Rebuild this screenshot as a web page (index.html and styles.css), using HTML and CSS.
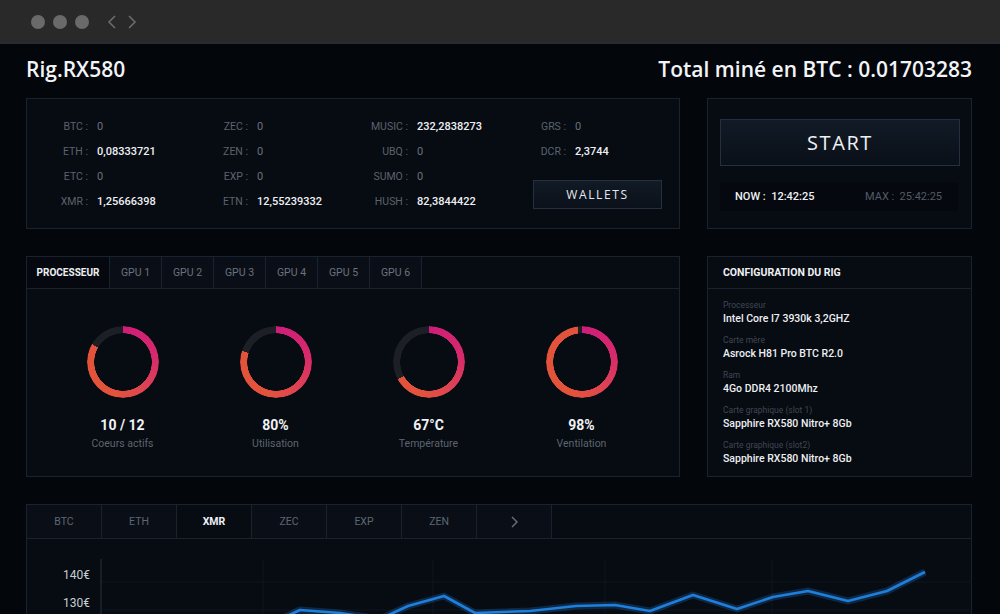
FILE: index.html
```html
<!DOCTYPE html>
<html lang="fr">
<head>
<meta charset="utf-8">
<title>Rig.RX580</title>
<link rel="stylesheet" href="styles.css">
</head>
<body>
<div class="titlebar">
  <span class="dot"></span><span class="dot"></span><span class="dot"></span>
  <svg class="nav" width="36" height="16" viewBox="0 0 36 16"><path d="M11 2 L5 8 L11 14"/><path d="M25 2 L31 8 L25 14"/></svg>
</div>
<main class="app">
  <header class="head">
    <h1 class="rig">Rig.RX580</h1>
    <div class="total">Total miné en BTC : 0.01703283</div>
  </header>

  <section class="row row-top">
    <div class="panel wallets">
      <div class="wgrid">
        <span class="lbl">BTC :</span><span class="val dim">0</span>
        <span class="lbl">ZEC :</span><span class="val dim">0</span>
        <span class="lbl">MUSIC :</span><span class="val">232,2838273</span>
        <span class="lbl">GRS :</span><span class="val dim">0</span>
        <span class="lbl">ETH :</span><span class="val">0,08333721</span>
        <span class="lbl">ZEN :</span><span class="val dim">0</span>
        <span class="lbl">UBQ :</span><span class="val dim">0</span>
        <span class="lbl">DCR :</span><span class="val">2,3744</span>
        <span class="lbl">ETC :</span><span class="val dim">0</span>
        <span class="lbl">EXP :</span><span class="val dim">0</span>
        <span class="lbl">SUMO :</span><span class="val dim">0</span>
        <span class="lbl">XMR :</span><span class="val">1,25666398</span>
        <span class="lbl">ETN :</span><span class="val">12,55239332</span>
        <span class="lbl">HUSH :</span><span class="val">82,3844422</span>
        <button class="wbtn">WALLETS</button>
      </div>
    </div>
    <div class="panel control">
      <button class="start">START</button>
      <div class="times">
        <span class="now">NOW :&nbsp; 12:42:25</span>
        <span class="max">MAX :&nbsp; 25:42:25</span>
      </div>
    </div>
  </section>

  <section class="row row-mid">
    <div class="panel proc">
      <nav class="tabs">
        <span class="tab active">PROCESSEUR</span>
        <span class="tab">GPU 1</span>
        <span class="tab">GPU 2</span>
        <span class="tab">GPU 3</span>
        <span class="tab">GPU 4</span>
        <span class="tab">GPU 5</span>
        <span class="tab">GPU 6</span>
      </nav>
      <div class="gauges">
        <div class="gauge"><div class="donut" style="--p:83.3"></div><div class="gval">10 / 12</div><div class="glbl">Coeurs actifs</div></div>
        <div class="gauge"><div class="donut" style="--p:80"></div><div class="gval">80%</div><div class="glbl">Utilisation</div></div>
        <div class="gauge"><div class="donut" style="--p:67"></div><div class="gval">67°C</div><div class="glbl">Température</div></div>
        <div class="gauge"><div class="donut" style="--p:98"></div><div class="gval">98%</div><div class="glbl">Ventilation</div></div>
      </div>
    </div>
    <div class="panel config">
      <div class="chead">CONFIGURATION DU RIG</div>
      <dl class="clist">
        <dt>Processeur</dt><dd>Intel Core I7 3930k 3,2GHZ</dd>
        <dt>Carte mère</dt><dd>Asrock H81 Pro BTC R2.0</dd>
        <dt>Ram</dt><dd>4Go DDR4 2100Mhz</dd>
        <dt>Carte graphique (slot 1)</dt><dd>Sapphire RX580 Nitro+ 8Gb</dd>
        <dt>Carte graphique (slot2)</dt><dd>Sapphire RX580 Nitro+ 8Gb</dd>
      </dl>
    </div>
  </section>

  <section class="panel chart">
    <nav class="ctabs">
      <span class="ctab">BTC</span>
      <span class="ctab">ETH</span>
      <span class="ctab active">XMR</span>
      <span class="ctab">ZEC</span>
      <span class="ctab">EXP</span>
      <span class="ctab">ZEN</span>
      <span class="ctab arrow"><svg width="10" height="12" viewBox="0 0 10 12"><path d="M3 1 L8 6 L3 11"/></svg></span>
      <span class="cfill"></span>
    </nav>
    <svg class="plot" width="945" height="160" viewBox="0 0 945 160">
      <g class="grid">
        <line x1="74" y1="43" x2="945" y2="43"/>
        <line x1="74" y1="71" x2="945" y2="71"/>
        <line x1="236" y1="20" x2="236" y2="160"/>
        <line x1="406" y1="20" x2="406" y2="160"/>
        <line x1="578" y1="20" x2="578" y2="160"/>
        <line x1="745" y1="20" x2="745" y2="160"/>
      </g>
      <line class="axis" x1="74" y1="20" x2="74" y2="160"/>
      <text class="ylab" x="63" y="40">140€</text>
      <text class="ylab" x="63" y="68">130€</text>
      <polyline class="glow" points="200,110 243,85 273,71 313,74 353,80 381,67 417,57 448,74 503,72 549,67 588,66 623,72 666,56 710,70 746,58 781,52 821,62 860,52 898,33"/>
      <polyline class="line" points="200,110 243,85 273,71 313,74 353,80 381,67 417,57 448,74 503,72 549,67 588,66 623,72 666,56 710,70 746,58 781,52 821,62 860,52 898,33"/>
    </svg>
  </section>
</main>
</body>
</html>
```

FILE: styles.css
```css
html, body {
  margin: 0;
  padding: 0;
  overflow: hidden;
  background: #03060b;
  height: 100%;
}
body {
  font-family: Roboto, "Noto Sans", sans-serif;
  color: #e9ecf0;
}

.titlebar {
  height: 44px;
  background: #2a292a;
  border-bottom: 1px solid #262c36;
  display: flex;
  align-items: center;
  gap: 8px;
  padding-left: 31px;
  box-sizing: border-box;
}
.dot {
  width: 14px;
  height: 14px;
  border-radius: 50%;
  background: #6a6a6a;
}
.nav {
  margin-left: 7px;
  fill: none;
  stroke: #6b6b6b;
  stroke-width: 1.6;
}

.app {
  padding: 0 28px 0 26px;
}
.head {
  height: 49px;
  display: flex;
  align-items: center;
  justify-content: space-between;
  margin-bottom: 5px;
  font-family: "Open Sans", sans-serif;
  font-weight: 600;
  font-size: 21px;
  color: #f2f4f7;
}
.rig {
  margin: 0;
  font-size: 21px;
  font-weight: 600;
}

.row {
  display: grid;
  grid-template-columns: 654px 265px;
  column-gap: 27px;
  margin-bottom: 27px;
}
.row-top { height: 131px; }
.row-mid { height: 221px; }

.panel {
  border: 1px solid #1a2230;
  background: #070b12;
  box-sizing: border-box;
}

/* wallets */
.wgrid {
  display: grid;
  grid-template-columns: 61px 102px 58px 102px 58px 97px 61px auto;
  grid-auto-rows: 25px;
  align-items: center;
  padding-top: 15px;
  font-size: 11px;
}
.lbl {
  text-align: right;
  color: #5b636e;
  font-size: 10.5px;
}
.val {
  color: #eef0f3;
  font-weight: 500;
  padding-left: 9px;
}
.val.dim {
  color: #6a727c;
  font-weight: 400;
}
.wbtn {
  grid-column: 7 / 9;
  grid-row: 3 / 5;
  justify-self: start;
  align-self: center;
  margin: 11px 0 0 28px;
  width: 129px;
  height: 29px;
  background: linear-gradient(#111a25, #0b111a);
  border: 1px solid #243040;
  color: #e6e9ee;
  font-family: "Open Sans", sans-serif;
  font-size: 12px;
  letter-spacing: 1.6px;
  cursor: pointer;
}

/* control */
.control {
  padding: 20px 12px 0 12px;
  display: flex;
  flex-direction: column;
  gap: 16px;
}
.start {
  width: 240px;
  height: 47px;
  background: linear-gradient(#111a26, #0a1018);
  border: 1px solid #223041;
  color: #eef1f4;
  font-family: "Open Sans", sans-serif;
  font-size: 20px;
  letter-spacing: 1.6px;
  cursor: pointer;
}
.times {
  width: 238px;
  height: 29px;
  background: #05080e;
  display: flex;
  align-items: center;
  font-size: 11px;
  padding-left: 15px;
  box-sizing: border-box;
}
.now {
  width: 130px;
  color: #eef0f3;
  font-weight: 500;
}
.max { color: #535b66; }

/* processor */
.proc { display: flex; flex-direction: column; }
.tabs {
  display: flex;
  height: 32px;
  border-bottom: 1px solid #1a2230;
  box-sizing: border-box;
}
.tab {
  width: 52px;
  display: flex;
  align-items: center;
  justify-content: center;
  border-right: 1px solid #1a2230;
  background: #0a0f17;
  font-size: 10.5px;
  color: #6a727c;
  box-sizing: border-box;
}
.tab.active {
  width: 83px;
  background: #05080e;
  color: #eef0f3;
  font-weight: 700;
  font-size: 10px;
}
.gauges {
  display: grid;
  grid-template-columns: repeat(4, 153px);
  padding: 37px 0 0 19px;
}
.gauge {
  display: flex;
  flex-direction: column;
  align-items: center;
}
.donut {
  width: 72px;
  height: 72px;
  border-radius: 50%;
  background: conic-gradient(#cf1d79 0%, #d62a6c 22%, #e0474d 42%, #e3533c 55%, #e3533c calc(var(--p) * 1%), #1c1f26 calc(var(--p) * 1%));
  -webkit-mask: radial-gradient(closest-side, transparent calc(100% - 7.5px), #000 calc(100% - 7px));
  mask: radial-gradient(closest-side, transparent calc(100% - 7.5px), #000 calc(100% - 7px));
}
.gval {
  margin-top: 18px;
  line-height: 18px;
  font-size: 14px;
  font-weight: 700;
  color: #f0f2f5;
}
.glbl {
  line-height: 16px;
  margin-top: 2px;
  font-size: 10.5px;
  color: #5d656f;
}

/* config */
.chead {
  height: 32px;
  display: flex;
  align-items: center;
  padding-left: 15px;
  border-bottom: 1px solid #1a2230;
  box-sizing: border-box;
  font-size: 10.5px;
  font-weight: 700;
  color: #eef0f3;
}
.clist {
  margin: 0;
  padding: 10px 0 0 15px;
}
.clist dt {
  font-size: 8.5px;
  line-height: 12px;
  color: #3f4752;
}
.clist dd {
  margin: 0 0 7px 0;
  font-size: 10.5px;
  line-height: 16px;
  font-weight: 500;
  color: #eef0f3;
}

/* chart */
.chart {
  width: 946px;
  height: 200px;
}
.ctabs {
  display: flex;
  height: 34px;
  border-bottom: 1px solid #1a2230;
  box-sizing: border-box;
}
.ctab {
  width: 75px;
  display: flex;
  align-items: center;
  justify-content: center;
  border-right: 1px solid #1a2230;
  background: #0a0f17;
  font-size: 10.5px;
  color: #5e6670;
  box-sizing: border-box;
}
.ctab.active {
  background: #070b12;
  color: #eef0f3;
  font-weight: 700;
}
.ctab.arrow svg {
  fill: none;
  stroke: #6a727c;
  stroke-width: 1.4;
}
.cfill {
  flex: 1;
  background: #070b12;
}
.plot { display: block; }
.grid line {
  stroke: #10161f;
  stroke-width: 1;
}
.axis {
  stroke: #2a323e;
  stroke-width: 1;
}
.ylab {
  fill: #c9cdd3;
  font-size: 12px;
  text-anchor: end;
  font-family: Roboto, "Noto Sans", sans-serif;
}
.line {
  fill: none;
  stroke: #1f7fdb;
  stroke-width: 2.6;
  stroke-linejoin: round;
}
.glow {
  fill: none;
  stroke: rgba(31, 127, 219, 0.25);
  stroke-width: 7;
  stroke-linejoin: round;
}
```
